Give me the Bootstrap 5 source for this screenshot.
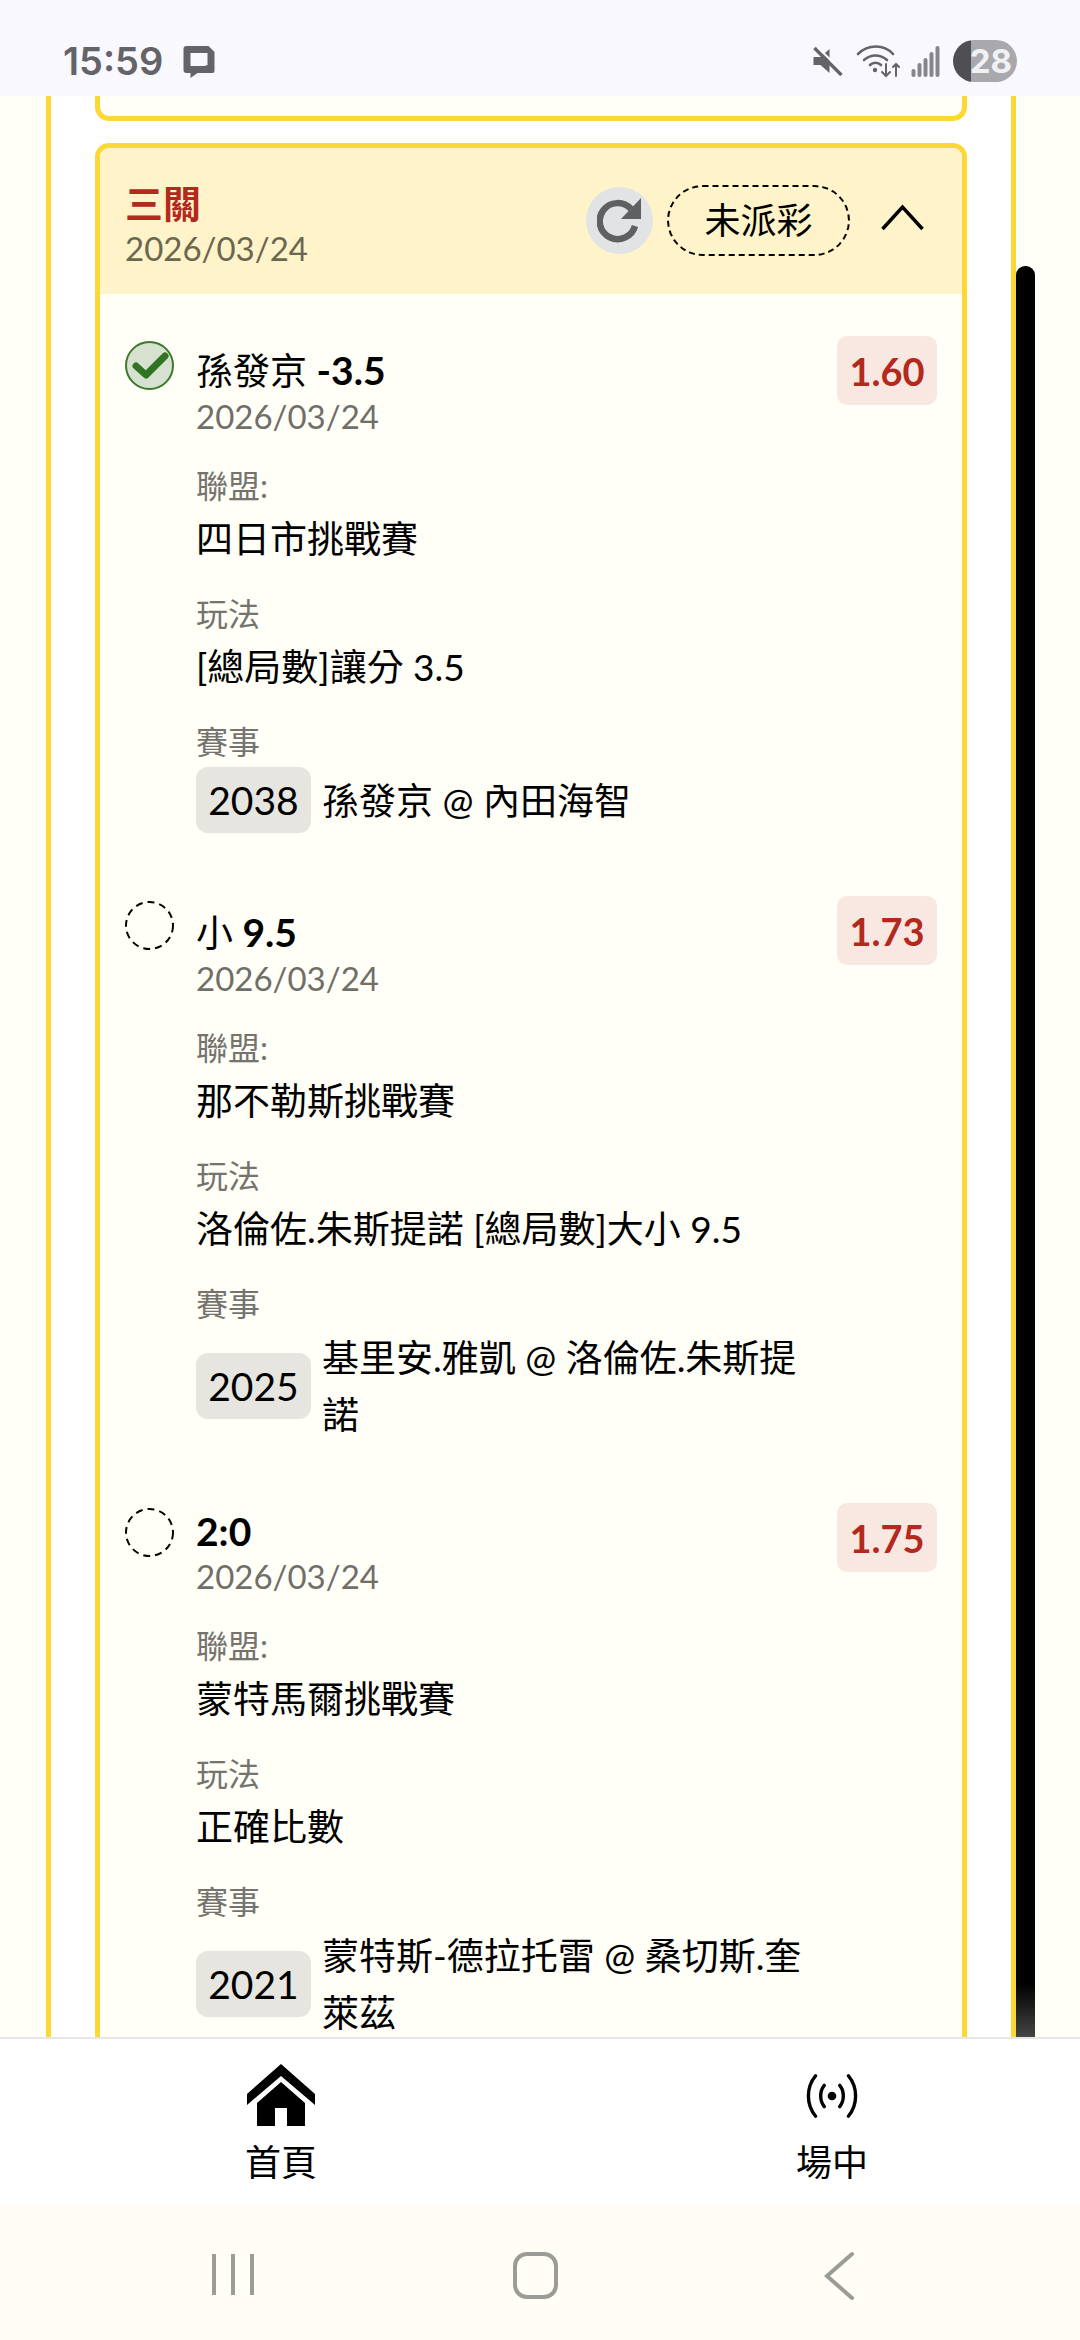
<!DOCTYPE html>
<html lang="zh-Hant">
  <head>
    <meta charset="UTF-8" />
    <meta name="viewport" content="width=device-width, initial-scale=1.0" />
    <title>三關</title>
    <link href="https://cdn.jsdelivr.net/npm/bootstrap@5.3.0/dist/css/bootstrap.min.css" rel="stylesheet" />
    <style>
      body {
        width: 1080px;
        height: 2340px;
        overflow: hidden;
        background-color: #fffef7;
        color: #000;
        font-family: "Lato", "Noto Sans CJK TC", sans-serif;
      }

      .status-bar {
        height: 96px;
        background-color: #f8f8fe;
        padding: 26px 63px 0 63px;
        color: #636368;
      }

      .status-time {
        font-family: "Inter", sans-serif;
        font-size: 38px;
        font-weight: 600;
        line-height: 1;
        margin-right: 19px;
      }

      .icon-mute { margin-right: 12px; }
      .icon-wifi { margin-right: 10px; }
      .icon-signal { margin-right: 13px; }

      .battery-pill {
        width: 64px;
        height: 42px;
        border-radius: 21px;
        background: linear-gradient(90deg, #4f4f53 0 28%, #a9a9ad 28%);
        color: #f1f1f4;
        font-family: "Inter", sans-serif;
        font-size: 33px;
        font-weight: 700;
        line-height: 42px;
        text-align: right;
        padding-right: 5px;
      }

      .scroll-area {
        height: 1941px;
        overflow: hidden;
        position: relative;
        padding-left: 46px;
      }

      .outer-panel {
        width: 970px;
        min-height: 100%;
        background-color: #fff;
        border-left: 5px solid #fbd836;
        border-right: 5px solid #fbd836;
        padding: 0 44px;
      }

      .ticket {
        border: 5px solid #fbd836;
        border-radius: 14px;
        background-color: #fffef7;
        overflow: hidden;
      }

      .ticket-prev {
        height: 25px;
        border-top: 0;
        border-top-left-radius: 0;
        border-top-right-radius: 0;
        margin-bottom: 22px;
      }

      .ticket-head {
        height: 146px;
        background-color: #fff3c9;
        padding: 0 39px 0 25px;
      }

      .ticket-name {
        color: #b3291d;
        font-size: 38px;
        font-weight: 700;
        line-height: 44px;
        margin-top: 8px;
      }

      .ticket-date {
        color: #6b6650;
        font-size: 33px;
        line-height: 44px;
        margin-top: 1px;
      }

      .refresh-btn {
        width: 67px;
        height: 67px;
        border-radius: 50%;
        background-color: #e2e3e5;
        margin-right: 14px;
      }

      .state-pill {
        width: 183px;
        height: 71px;
        border: 2px dashed #000;
        border-radius: 36px;
        font-size: 36px;
        line-height: 1;
        margin-right: 30px;
      }

      .head-actions {
        margin-bottom: 2px;
        margin-right: -2px;
      }

      .chevron-up {
        margin-bottom: 6px;
      }

      .pick-row {
        padding: 63px 25px 0 25px;
      }

      .pick-first {
        padding-top: 42px;
      }

      .pick-last {
        padding-top: 60px;
        padding-bottom: 60px;
      }

      .pick-mark {
        flex: 0 0 49px;
        width: 49px;
        height: 49px;
        margin-top: 5px;
        margin-right: 22px;
      }

      .pick-title {
        font-size: 37px;
        line-height: 50px;
        margin-top: 11px;
      }

      .pick-first .pick-title {
        margin-top: 9px;
      }

      .pick-title b {
        font-size: 39px;
        font-weight: 700;
      }

      .pick-title-plain {
        line-height: 42px;
        margin-top: 7px;
        margin-bottom: 3px;
      }

      .pick-date {
        color: #6f6e69;
        font-size: 33px;
        line-height: 40px;
      }

      .field-label {
        color: #74736e;
        font-size: 32px;
        line-height: 44px;
        margin-top: 28px;
      }

      .field-value {
        font-size: 37px;
        line-height: 50px;
        margin-top: 6px;
      }

      .match-line {
        margin-top: 3px;
      }

      .match-code {
        flex: 0 0 115px;
        height: 66px;
        border-radius: 12px;
        background-color: #e6e5e0;
        font-size: 39px;
        line-height: 1;
      }

      .match-name {
        font-size: 37px;
        line-height: 57px;
        width: 490px;
        margin-left: 11px;
      }

      .odds-tag {
        flex: 0 0 100px;
        height: 69px;
        border-radius: 10px;
        background-color: #f8e8e1;
        color: #b3291d;
        font-size: 38px;
        font-weight: 700;
        line-height: 1;
      }

      .scroll-thumb {
        position: absolute;
        left: 1016px;
        top: 170px;
        width: 19px;
        height: 1771px;
        border-radius: 9px 9px 0 0;
        background: linear-gradient(180deg, #000 97%, #444 100%);
      }

      .bottom-nav {
        height: 168px;
        background-color: #fff;
        border-top: 2px solid #e6e6e6;
        padding-left: 131px;
        gap: 251px;
      }

      .nav-item-box {
        width: 300px;
        font-size: 36px;
        line-height: 1;
        color: #000;
      }

      .nav-icon {
        height: 66px;
        margin-top: 25px;
        margin-bottom: 14px;
      }

      .live-icon {
        margin-top: 9px;
      }

      .system-bar {
        height: 135px;
        background-color: #fffdf6;
      }
    </style>
  </head>
  <body class="d-flex flex-column">
    <div class="status-bar d-flex align-items-center">
      <span class="status-time">15:59</span>
      <svg width="34" height="33" viewBox="0 0 33 33"><path fill="#636368" fill-rule="evenodd" d="M4 1h22l6 6v19a2 2 0 0 1-2 2H15l-7 5v-5H4a3 3 0 0 1-3-3V4a3 3 0 0 1 3-3zm4 7v13h14l3-1V8z"/></svg>
      <div class="ms-auto d-flex align-items-center">
        <svg width="31" height="30" viewBox="0 0 30 30" class="icon-mute"><path fill="#636368" d="M1 11h7l9-8v24l-9-8H1z"/><path stroke="#636368" stroke-width="3.5" d="M2 2l27 27"/><path stroke="#f8f8fe" stroke-width="2" d="M5 1l25 25"/></svg>
        <svg width="46" height="34" viewBox="0 0 44 34" class="icon-wifi" fill="none" stroke="#636368" stroke-width="2.6" stroke-linecap="round"><path d="M2 10c10-10 26-10 35 0M8 16c7-6 16-6 23 0M14 21c3-3 8-3 11 0"/><circle cx="19" cy="26" r="2.2" fill="#636368" stroke="none"/><path d="M30 20v12m-4-4 4 4 4-4M40 32V20m-3 3 3-3 3 3" stroke-width="2"/></svg>
        <svg width="29" height="32" viewBox="0 0 28 32" class="icon-signal" fill="#85858a"><rect x="0" y="24" width="4" height="8" rx="2"/><rect x="6" y="18" width="4" height="14" rx="2"/><rect x="12" y="13" width="4" height="19" rx="2"/><rect x="18" y="7" width="4" height="25" rx="2"/><rect x="24" y="1" width="4" height="31" rx="2"/></svg>
        <div class="battery-pill">28</div>
      </div>
    </div>

    <div class="scroll-area">
      <div class="outer-panel">
        <div class="ticket ticket-prev"></div>
        <div class="ticket">
          <div class="ticket-head d-flex align-items-center">
            <div>
              <div class="ticket-name">三關</div>
              <div class="ticket-date">2026/03/24</div>
            </div>
            <div class="head-actions ms-auto d-flex align-items-center">
              <div class="refresh-btn d-flex align-items-center justify-content-center">
                <svg width="46" height="46" viewBox="0 0 46 46" fill="none"><path stroke="#5f6063" stroke-width="6.5" d="M38 29a18 18 0 1 1-4-17"/><path fill="#5f6063" d="M44 1v21H24z"/></svg>
              </div>
              <div class="state-pill d-flex align-items-center justify-content-center">未派彩</div>
              <svg width="45" height="28" viewBox="0 0 44 28" fill="none" class="chevron-up"><path stroke="#000" stroke-width="3.5" d="M2 26 22 4l20 22"/></svg>
            </div>
          </div>

          <div class="pick-row pick-first d-flex">
            <svg class="pick-mark" viewBox="0 0 49 49"><circle cx="24.5" cy="24.5" r="23.5" fill="#d6e2cf" stroke="#3a7a2a" stroke-width="2"/><path fill="none" stroke="#2f7420" stroke-width="7" stroke-linecap="round" stroke-linejoin="round" d="M11 25l10 9 19-19"/></svg>
            <div class="flex-grow-1">
              <div class="pick-title">孫發京 <b>-3.5</b></div>
              <div class="pick-date">2026/03/24</div>
              <div class="field-label">聯盟:</div>
              <div class="field-value">四日市挑戰賽</div>
              <div class="field-label">玩法</div>
              <div class="field-value">[總局數]讓分 3.5</div>
              <div class="field-label">賽事</div>
              <div class="match-line d-flex align-items-center">
                <div class="match-code d-flex align-items-center justify-content-center">2038</div>
                <div class="match-name">孫發京 @ 內田海智</div>
              </div>
            </div>
            <div class="odds-tag d-flex align-items-center justify-content-center">1.60</div>
          </div>

          <div class="pick-row d-flex">
            <svg class="pick-mark" viewBox="0 0 49 49"><circle cx="24.5" cy="24.5" r="23.5" fill="none" stroke="#000" stroke-width="2" stroke-dasharray="7 5"/></svg>
            <div class="flex-grow-1">
              <div class="pick-title">小 <b>9.5</b></div>
              <div class="pick-date">2026/03/24</div>
              <div class="field-label">聯盟:</div>
              <div class="field-value">那不勒斯挑戰賽</div>
              <div class="field-label">玩法</div>
              <div class="field-value">洛倫佐.朱斯提諾 [總局數]大小 9.5</div>
              <div class="field-label">賽事</div>
              <div class="match-line d-flex align-items-center">
                <div class="match-code d-flex align-items-center justify-content-center">2025</div>
                <div class="match-name">基里安.雅凱 @ 洛倫佐.朱斯提諾</div>
              </div>
            </div>
            <div class="odds-tag d-flex align-items-center justify-content-center">1.73</div>
          </div>

          <div class="pick-row pick-last d-flex">
            <svg class="pick-mark" viewBox="0 0 49 49"><circle cx="24.5" cy="24.5" r="23.5" fill="none" stroke="#000" stroke-width="2" stroke-dasharray="7 5"/></svg>
            <div class="flex-grow-1">
              <div class="pick-title pick-title-plain"><b>2:0</b></div>
              <div class="pick-date">2026/03/24</div>
              <div class="field-label">聯盟:</div>
              <div class="field-value">蒙特馬爾挑戰賽</div>
              <div class="field-label">玩法</div>
              <div class="field-value">正確比數</div>
              <div class="field-label">賽事</div>
              <div class="match-line d-flex align-items-center">
                <div class="match-code d-flex align-items-center justify-content-center">2021</div>
                <div class="match-name">蒙特斯-德拉托雷 @ 桑切斯.奎萊茲</div>
              </div>
            </div>
            <div class="odds-tag d-flex align-items-center justify-content-center">1.75</div>
          </div>
        </div>
      </div>
      <div class="scroll-thumb"></div>
    </div>

    <div class="bottom-nav d-flex">
      <div class="nav-item-box text-center">
        <div class="nav-icon">
          <svg width="68" height="62" viewBox="0 0 68 62"><path fill="#000" d="M34 0 68 30v11L34 12 0 41V30z"/><path fill="#000" d="M34 18 10 39v23h18V44h12v18h18V39z"/></svg>
        </div>
        <div>首頁</div>
      </div>
      <div class="nav-item-box text-center">
        <div class="nav-icon">
          <svg width="52" height="46" viewBox="0 0 54 46" fill="none" stroke="#000" stroke-width="3.5" stroke-linecap="round" class="live-icon"><circle cx="27" cy="23" r="4.5" fill="#000" stroke="none"/><path d="M19 12c-5 6-5 16 0 22M35 12c5 6 5 16 0 22M10 2C0 14 0 32 10 44M44 2c10 12 10 30 0 42"/></svg>
        </div>
        <div>場中</div>
      </div>
    </div>

    <div class="system-bar d-flex align-items-center">
      <svg width="1080" height="135" viewBox="0 0 1080 135" fill="none" stroke="#9b9b98" stroke-width="4"><path d="M214 49v41M233 49v41M252 49v41"/><rect x="515" y="49" width="41" height="43" rx="12"/><path d="M852 49 827 71l25 22" stroke-linecap="round"/></svg>
    </div>

    <script src="https://cdn.jsdelivr.net/npm/bootstrap@5.3.0/dist/js/bootstrap.bundle.min.js"></script>
  </body>
</html>
